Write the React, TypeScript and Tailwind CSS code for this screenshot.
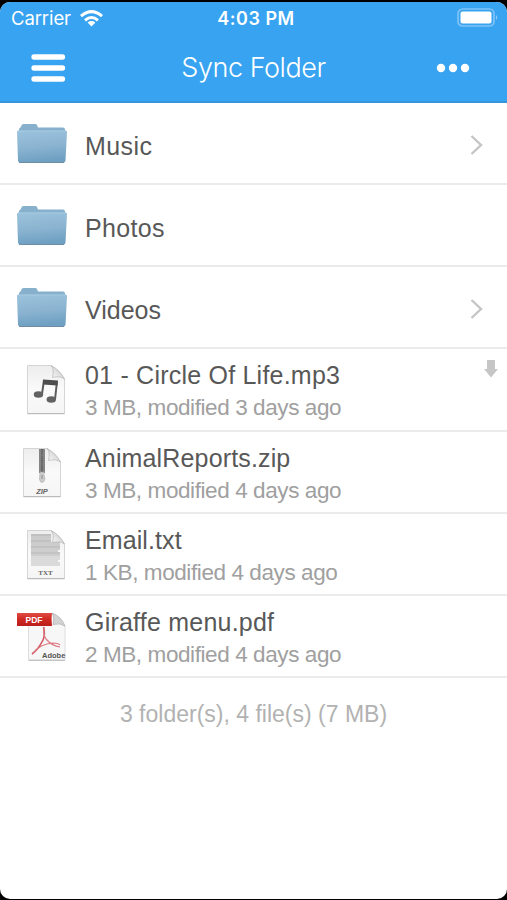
import type { ReactNode } from "react";

function FolderIcon() {
  return (
    <svg width="52" height="42" viewBox="0 0 52 42">
      <defs>
        <linearGradient id="folderFront" x1="0" y1="0" x2="0.15" y2="1">
          <stop offset="0" stopColor="#9cc3dd" />
          <stop offset="0.55" stopColor="#8bb4d1" />
          <stop offset="1" stopColor="#6fa0c2" />
        </linearGradient>
      </defs>
      <path d="M3 10V6.500Q3 5 4.500 4.500L6 1.600Q6.500 1 8 1H19Q20.500 1 21 2L22 4.500H47Q49 4.500 49 6.500V10Z" fill="#86b0cc" />
      <path d="M1 9Q1 7.500 2.500 7.500H49.500Q51 7.500 51 9L49.500 37.500Q49.500 39.500 47.500 39.500H4Q2 39.500 2 37.500Z" fill="url(#folderFront)" />
      <path d="M2 8H50" stroke="#aacde2" strokeWidth="0.8" />
      <path d="M3 39.500H48" stroke="#708da5" strokeWidth="1" />
    </svg>
  );
}

function Page({ children }: { children?: ReactNode }) {
  return (
    <svg width="40" height="52" viewBox="0 0 40 52">
      <defs>
        <linearGradient id="paper" x1="0" y1="0" x2="0" y2="1">
          <stop offset="0" stopColor="#ededed" />
          <stop offset="0.5" stopColor="#fafafa" />
          <stop offset="1" stopColor="#f5f5f5" />
        </linearGradient>
        <linearGradient id="curl" x1="0" y1="1" x2="1" y2="0">
          <stop offset="0" stopColor="#ffffff" />
          <stop offset="0.5" stopColor="#dedede" />
          <stop offset="1" stopColor="#aaaaaa" />
        </linearGradient>
      </defs>
      <path d="M1.500 1.500H25Q31 5 38.500 15V49.500H1.500Z" fill="url(#paper)" stroke="#d5d5d5" />
      <path d="M1.500 49.700H38.500" stroke="#b4b4b4" />
      {children}
      <path d="M25 1.500Q28.500 5 26.500 13.500Q34 11.500 38.500 15Q34 6 25 1.500Z" fill="url(#curl)" stroke="#b5b5b5" strokeWidth="0.7" />
    </svg>
  );
}

function MusicIcon() {
  return (
    <Page>
      <path d="M18 16L16 30M31 17.500L29 35.500" stroke="#5c5c5c" strokeWidth="2" />
      <path d="M17 15.500L32 16.500L31.500 21.500L17 20.500Z" fill="#4d4d4d" />
      <ellipse cx="12.500" cy="30.500" rx="4.700" ry="3.300" fill="#626262" />
      <ellipse cx="25.300" cy="35.500" rx="4.700" ry="3.300" fill="#626262" />
    </Page>
  );
}

function ZipIcon() {
  return (
    <Page>
      <path d="M17 2H23V26H17Z" fill="#858585" />
      <path d="M20 2V26" stroke="#626262" strokeWidth="2" strokeDasharray="1.200 0.600" />
      <path d="M18 25H22V28L23 32Q22 35.500 20 35.500Q18 35.500 17.500 32Z" fill="#cecece" stroke="#aaaaaa" strokeWidth="0.6" />
      <path d="M20 28V32" stroke="#888888" />
      <text x="20" y="47" textAnchor="middle" fontFamily="Liberation Sans, sans-serif" fontSize="7.500" fontWeight="600" fontStyle="italic" fill="#666666">ZIP</text>
    </Page>
  );
}

const textLines = [6, 8, 10, 12, 14, 16, 18, 20, 22, 24, 26, 28, 30, 32, 34, 36];

function TxtIcon() {
  return (
    <Page>
      {textLines.map((y, i) => (
        <path key={y} d={`M5 ${y}H${y < 14 ? 25 : i % 5 === 3 ? 32 : 34}`} stroke={y > 26 ? "#c9c9c9" : i % 3 === 0 ? "#a6a6a6" : "#b6b6b6"} strokeWidth="1.300" />
      ))}
      <text x="19.500" y="46" textAnchor="middle" fontFamily="Liberation Serif, serif" fontSize="7" fontWeight="600" fill="#666666">TXT</text>
    </Page>
  );
}

function PdfIcon() {
  return (
    <svg width="52" height="52" viewBox="0 0 52 52">
      <defs>
        <linearGradient id="ribbon" x1="0" y1="0" x2="0" y2="1">
          <stop offset="0" stopColor="#df4c44" />
          <stop offset="0.5" stopColor="#cf2822" />
          <stop offset="1" stopColor="#b91d1b" />
        </linearGradient>
      </defs>
      <path d="M12.500 3H37L49 15V49H12.500Z" fill="#f7f7f7" stroke="#dedede" />
      <path d="M12.500 49.300H49" stroke="#b8b8b8" />
      <path d="M36 2Q39 6 37 13.500Q44 11.500 49 15Q45 5 36 2Z" fill="#d3d3d3" stroke="#aaaaaa" strokeWidth="0.7" />
      <path d="M27.500 16Q29.500 23 27 29Q22 39 16 43" fill="none" stroke="#d25560" strokeWidth="1.600" />
      <path d="M28 16Q27 24 30 28Q36 35 44 36M17 42Q24 33 37 32Q42 32 44 34" fill="none" stroke="#db7881" strokeWidth="1.200" />
      <path d="M1 2H36Q35 8 36 15H1Z" fill="url(#ribbon)" />
      <text x="9.500" y="12" fontFamily="Liberation Sans, sans-serif" fontSize="9.500" fontWeight="700" textLength="17" lengthAdjust="spacingAndGlyphs" fill="#ffffff">PDF</text>
      <text x="26" y="46.500" fontFamily="Liberation Sans, sans-serif" fontSize="7.500" fontWeight="700" fill="#555555">Adobe</text>
    </svg>
  );
}

function Chevron() {
  return (
    <svg width="14" height="22" viewBox="0 0 14 22" className="mr-[23px] mt-1" fill="none" stroke="#c5c5c5" strokeWidth="2.400">
      <path d="M1.500 2L11 11L1.500 20" />
    </svg>
  );
}

function FolderRow({ name, chevron, spacing }: { name: string; chevron?: boolean; spacing: string }) {
  return (
    <li className="flex h-[82.15px] items-center border-b-2 border-[#ebebeb] pl-4">
      <div className="w-[69px] shrink-0 pt-[2px]"><FolderIcon /></div>
      <span className={`grow pt-[5px] text-[25px] leading-8 text-[#585858] ${spacing}`}>{name}</span>
      {chevron && <Chevron />}
    </li>
  );
}

interface FileRowProps {
  name: string;
  detail: string;
  icon: ReactNode;
  inset: string;
  spacing: string;
  downloaded?: boolean;
}

function FileRow({ name, detail, icon, inset, spacing, downloaded }: FileRowProps) {
  return (
    <li className="flex h-[82.15px] border-b-2 border-[#ebebeb]">
      <div className={`w-[85px] shrink-0 pt-[15px] ${inset}`}>{icon}</div>
      <div className="grow whitespace-nowrap pt-[10px]">
        <div className={`text-[25px] leading-8 text-[#585858] ${spacing}`}>{name}</div>
        <div className="text-[22.5px] leading-[33px] tracking-[-0.41px] text-[#a0a0a0]">{detail}</div>
      </div>
      {downloaded && (
        <svg width="14" height="18" viewBox="0 0 14 18" className="mr-[9px] mt-[11px] shrink-0">
          <path d="M3 0H11V9H14L7 17.500L0 9H3Z" fill="#c6c6c6" />
        </svg>
      )}
    </li>
  );
}

export default function App() {
  return (
    <div className="h-[900px] w-[507px] overflow-hidden bg-black pt-[2px] font-['Liberation_Sans',Arial,sans-serif]">
      <main className="h-[897px] overflow-hidden rounded-[10px] bg-white">
        <header className="h-[101px] border-b-2 border-[#3695dc] bg-[#38a3f0] text-white">
          <div className="grid h-8 grid-cols-[1fr_auto_1fr] items-center font-['Inter',sans-serif]">
            <div className="flex items-center gap-[9px] pl-[11px]">
              <span className="pt-px text-[18.5px] tracking-[-0.1px]">Carrier</span>
              <svg width="23" height="17" viewBox="0 0 23 17" fill="none" stroke="white" strokeWidth="3">
                <path d="M1 6.200Q11.500 -3 22 6.200M5 10.300Q11.500 4.800 18 10.300" />
                <path d="M7.600 12.500Q11.500 9.700 15.400 12.500L11.500 16.500Z" fill="white" stroke="none" />
              </svg>
            </div>
            <span className="pl-[5px] text-[18px] font-semibold tracking-[0.5px]">4:03 PM</span>
            <svg width="42" height="20" viewBox="0 0 42 20" className="mr-2 justify-self-end">
              <rect x="1" y="1" width="36" height="17" rx="4.500" fill="none" stroke="#7fc3f8" strokeWidth="1.700" />
              <rect x="3.500" y="3.500" width="31" height="12" rx="2" fill="white" />
              <path d="M39 7Q41.500 9.500 39 12Z" fill="#8fcafa" />
            </svg>
          </div>
          <div className="grid h-[68px] grid-cols-[1fr_auto_1fr] items-center">
            <svg width="36" height="30" viewBox="0 0 36 30" className="ml-[30px]" stroke="white" strokeWidth="5.300" strokeLinecap="round">
              <path d="M4 4H32.500M4 15H32.500M4 26H32.500" />
            </svg>
            <h1 className="font-['Inter',sans-serif] text-[27px] font-light leading-9 tracking-[-0.45px]">Sync Folder</h1>
            <svg width="34" height="10" viewBox="0 0 34 10" className="mr-[37px] justify-self-end" fill="white">
              <circle cx="5" cy="5" r="4.200" /><circle cx="17" cy="5" r="4.200" /><circle cx="29" cy="5" r="4.200" />
            </svg>
          </div>
        </header>
        <ul>
          <FolderRow name="Music" chevron spacing="tracking-[0.4px]" />
          <FolderRow name="Photos" spacing="tracking-[0.35px]" />
          <FolderRow name="Videos" chevron spacing="tracking-[0px]" />
          <FileRow name="01 - Circle Of Life.mp3" detail="3 MB, modified 3 days ago" icon={<MusicIcon />} inset="pl-[26px]" spacing="tracking-[0.22px]" downloaded />
          <FileRow name="AnimalReports.zip" detail="3 MB, modified 4 days ago" icon={<ZipIcon />} inset="pl-[22px]" spacing="tracking-[0.15px]" />
          <FileRow name="Email.txt" detail="1 KB, modified 4 days ago" icon={<TxtIcon />} inset="pl-[26px]" spacing="tracking-[0.1px]" />
          <FileRow name="Giraffe menu.pdf" detail="2 MB, modified 4 days ago" icon={<PdfIcon />} inset="pl-4" spacing="tracking-[0.22px]" />
        </ul>
        <p className="pt-[20px] text-center text-[23px] leading-8 text-[#b2b2b2]">3 folder(s), 4 file(s) (7 MB)</p>
      </main>
    </div>
  );
}
